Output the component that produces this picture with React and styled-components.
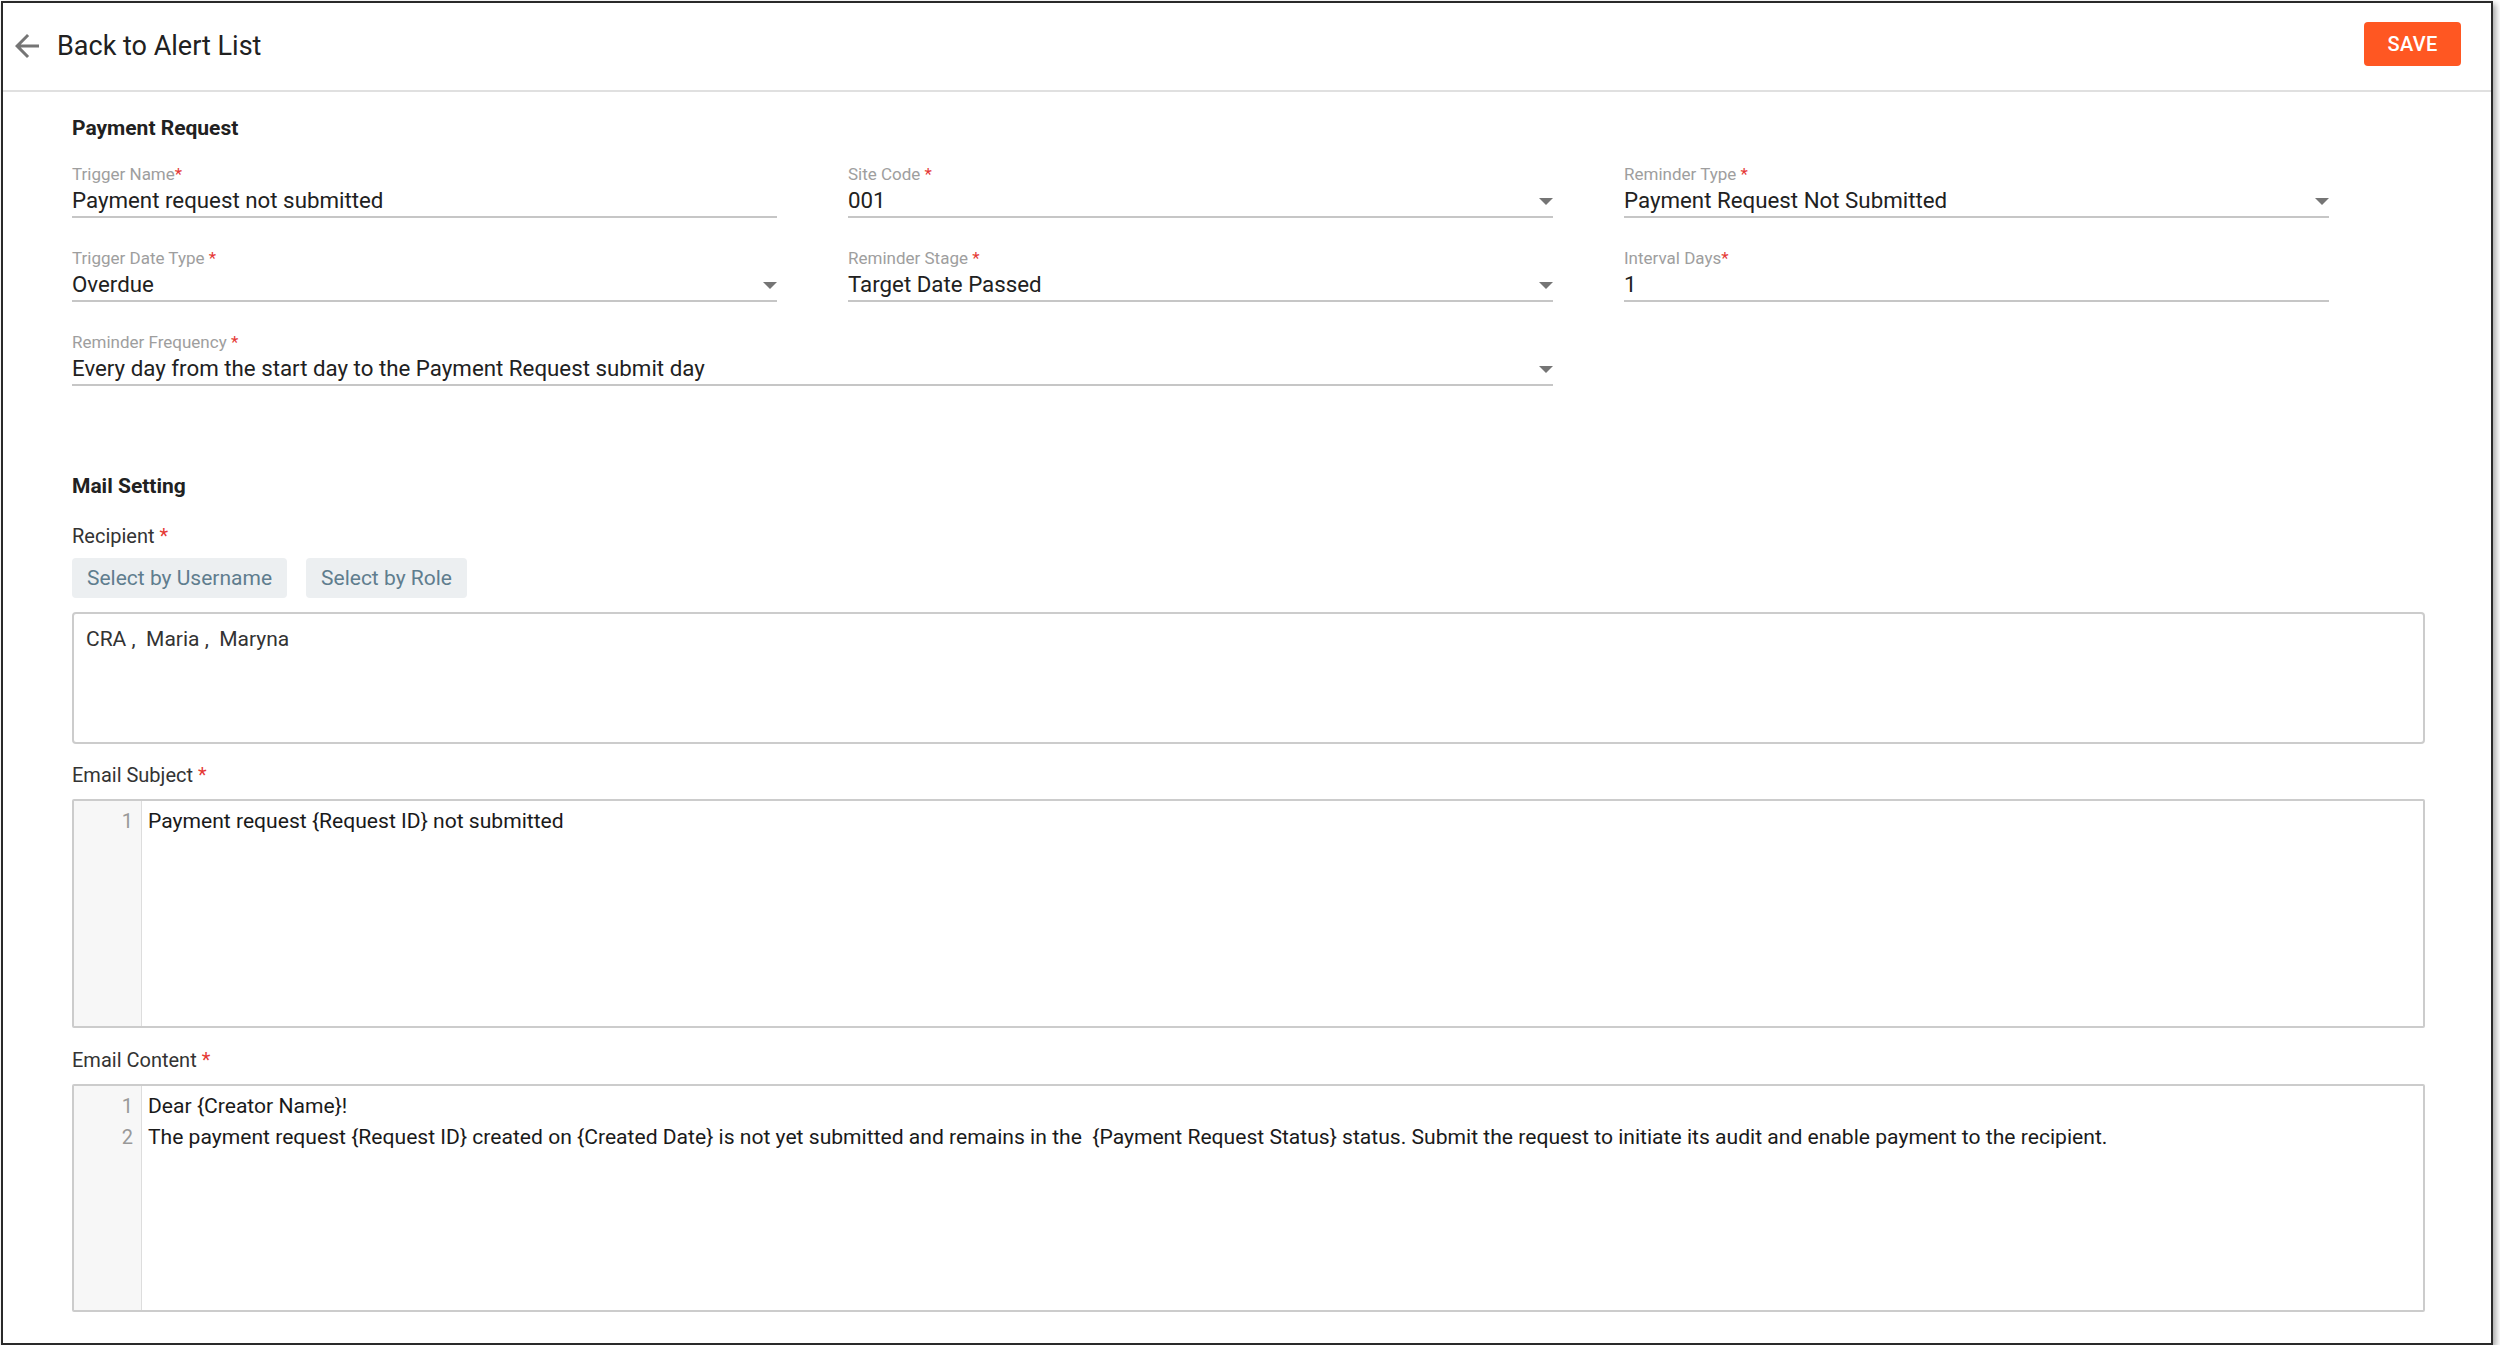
import styled, { createGlobalStyle } from "styled-components";

const GlobalStyle = createGlobalStyle`
	* { box-sizing: border-box; }
	body {
		margin: 0;
		background: #ffffff;
		font-family: Roboto, "Liberation Sans", Arial, sans-serif;
		color: #212121;
	}
`;

const Frame = styled.div`
	margin: 1px 0 0 1px;
	width: 2492px;
	height: 1344px;
	border: 2px solid #2a2a2a;
	box-shadow: 3px 3px 6px rgba(0, 0, 0, 0.35);
	background: #ffffff;
	display: flex;
	flex-direction: column;
`;

const Header = styled.div`
	height: 89px;
	flex-shrink: 0;
	display: flex;
	align-items: center;
	justify-content: space-between;
	padding: 0 30px 2px 6px;
	border-bottom: 2px solid #e0e0e0;
`;

const BackLink = styled.div`
	display: flex;
	align-items: center;
	gap: 12px;
	cursor: pointer;
	> svg {
		width: 36px;
		height: 36px;
		fill: #757575;
	}
	> span {
		font-size: 27px;
		color: #212121;
		line-height: 32px;
	}
`;

const SaveButton = styled.button`
	width: 97px;
	height: 44px;
	border: none;
	border-radius: 4px;
	background: #ff5722;
	color: #ffffff;
	font-family: Roboto, "Liberation Sans", Arial, sans-serif;
	font-size: 20px;
	font-weight: 500;
	letter-spacing: 0.3px;
	margin-top: -3px;
	cursor: pointer;
`;

const Body = styled.div`
	padding: 24px 66px 0 69px;
	display: flex;
	flex-direction: column;
`;

const SectionTitle = styled.h3`
	margin: ${(p) => p.$top || 0}px 0 0 0;
	font-size: 21px;
	line-height: 24px;
	font-weight: 700;
	color: #212121;
`;

const FieldGrid = styled.div`
	margin-top: 24px;
	display: grid;
	grid-template-columns: repeat(3, 705px);
	column-gap: 71px;
	row-gap: 30px;
`;

const Field = styled.div`
	grid-column: span ${(p) => p.$span || 1};
	display: flex;
	flex-direction: column;
`;

const FieldLabel = styled.label`
	font-size: 17px;
	line-height: 20px;
	color: #9e9e9e;
	> em {
		font-style: normal;
		color: #e53935;
	}
`;

const ValueRow = styled.div`
	margin-top: 3px;
	display: flex;
	align-items: center;
	justify-content: space-between;
	padding-bottom: 3px;
	border-bottom: 2px solid #c6c6c6;
	> span {
		font-size: 22.3px;
		line-height: 26px;
		color: #212121;
	}
`;

const Caret = styled.i`
	width: 0;
	height: 0;
	margin-top: 3px;
	border-left: 7px solid transparent;
	border-right: 7px solid transparent;
	border-top: 7px solid #757575;
`;

const FormLabel = styled.div`
	margin-top: ${(p) => p.$top}px;
	font-size: 20px;
	line-height: 24px;
	color: #333333;
	> em {
		font-style: normal;
		color: #e53935;
		margin-left: 5px;
	}
`;

const ButtonRow = styled.div`
	margin-top: 10px;
	display: flex;
	gap: 19px;
`;

const GhostButton = styled.button`
	height: 40px;
	padding: 0 15px;
	border: none;
	border-radius: 4px;
	background: #eceff1;
	color: #5f7d8e;
	font-family: Roboto, "Liberation Sans", Arial, sans-serif;
	font-size: 21px;
	cursor: pointer;
`;

const RecipientBox = styled.div`
	margin-top: 14px;
	height: 132px;
	border: 2px solid #cccccc;
	border-radius: 4px;
	padding: 13px 12px;
	font-size: 21px;
	line-height: 24px;
	color: #333333;
	white-space: pre;
`;

const Editor = styled.div`
	margin-top: 12px;
	height: ${(p) => p.$height}px;
	border: 2px solid #cccccc;
	border-radius: 2px;
	display: flex;
	overflow: hidden;
`;

const Gutter = styled.div`
	width: 68px;
	flex-shrink: 0;
	background: #f7f7f7;
	border-right: 1px solid #dddddd;
	padding: 5px 8px 0 0;
	text-align: right;
	font-size: 20px;
	line-height: 30.5px;
	color: #999999;
`;

const Lines = styled.div`
	padding: 5px 0 0 6px;
	font-size: 21.1px;
	line-height: 30.5px;
	color: #1a1a1a;
	white-space: pre;
`;

const ArrowBack = () => (
	<svg viewBox="0 0 24 24">
		<path d="M20 11H7.83l5.59-5.59L12 4l-8 8 8 8 1.41-1.41L7.83 13H20v-2z" />
	</svg>
);

const fields = [
	{ label: "Trigger Name", star: "*", value: "Payment request not submitted" },
	{ label: "Site Code", star: " *", value: "001", select: true },
	{ label: "Reminder Type", star: " *", value: "Payment Request Not Submitted", select: true },
	{ label: "Trigger Date Type", star: " *", value: "Overdue", select: true },
	{ label: "Reminder Stage", star: " *", value: "Target Date Passed", select: true },
	{ label: "Interval Days", star: "*", value: "1" },
	{
		label: "Reminder Frequency",
		star: " *",
		value: "Every day from the start day to the Payment Request submit day",
		select: true,
		span: 2,
	},
];

const subjectLines = ["Payment request {Request ID} not submitted"];

const contentLines = [
	"Dear {Creator Name}!",
	"The payment request {Request ID} created on {Created Date} is not yet submitted and remains in the  {Payment Request Status} status. Submit the request to initiate its audit and enable payment to the recipient.",
];

const CodeEditor = ({ lines, height }) => (
	<Editor $height={height}>
		<Gutter>
			{lines.map((_, i) => (
				<div key={i}>{i + 1}</div>
			))}
		</Gutter>
		<Lines>
			{lines.map((line, i) => (
				<div key={i}>{line}</div>
			))}
		</Lines>
	</Editor>
);

const App = () => {
	return (
		<>
			<GlobalStyle />
			<Frame>
				<Header>
					<BackLink>
						<ArrowBack />
						<span>Back to Alert List</span>
					</BackLink>
					<SaveButton>SAVE</SaveButton>
				</Header>
				<Body>
					<SectionTitle>Payment Request</SectionTitle>
					<FieldGrid>
						{fields.map((f) => (
							<Field key={f.label} $span={f.span}>
								<FieldLabel>
									{f.label}
									<em>{f.star}</em>
								</FieldLabel>
								<ValueRow>
									<span>{f.value}</span>
									{f.select && <Caret />}
								</ValueRow>
							</Field>
						))}
					</FieldGrid>

					<SectionTitle $top={88}>Mail Setting</SectionTitle>
					<FormLabel $top={26}>
						Recipient<em>*</em>
					</FormLabel>
					<ButtonRow>
						<GhostButton>Select by Username</GhostButton>
						<GhostButton>Select by Role</GhostButton>
					</ButtonRow>
					<RecipientBox>{"CRA ,  Maria ,  Maryna"}</RecipientBox>

					<FormLabel $top={19}>
						Email Subject<em>*</em>
					</FormLabel>
					<CodeEditor lines={subjectLines} height={229} />

					<FormLabel $top={20}>
						Email Content<em>*</em>
					</FormLabel>
					<CodeEditor lines={contentLines} height={228} />
				</Body>
			</Frame>
		</>
	);
};

export default App;
